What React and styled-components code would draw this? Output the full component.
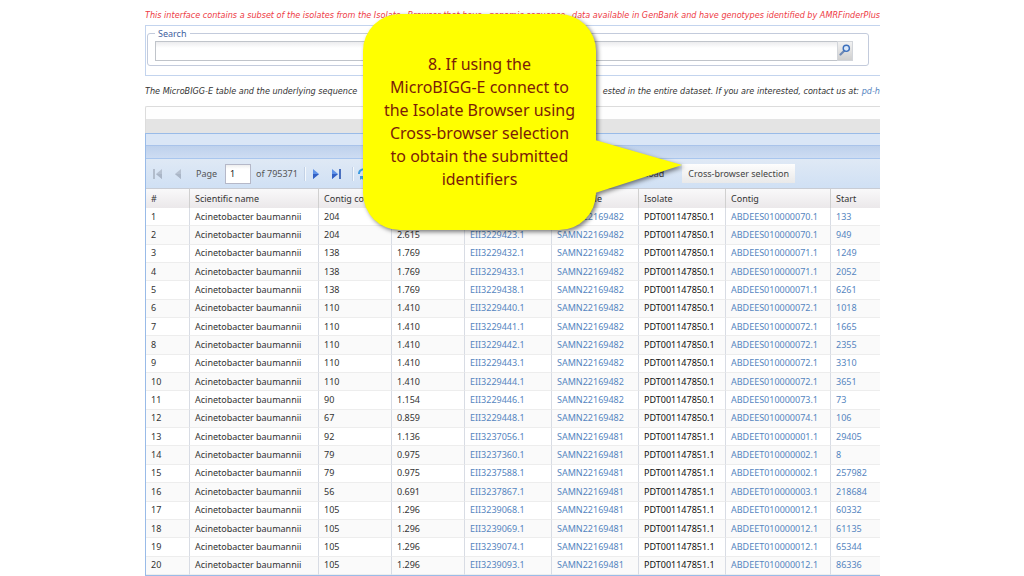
// Libs
import React from 'react';
import styled, { createGlobalStyle } from 'styled-components';

// Data
const columns = [
	{ title: '#', width: 43 },
	{ title: 'Scientific name', width: 129 },
	{ title: 'Contig cov', width: 73 },
	{ title: 'Ratio', width: 73 },
	{ title: 'Protein', width: 87, link: true },
	{ title: 'BioSample', width: 87, link: true },
	{ title: 'Isolate', width: 87, dark: true },
	{ title: 'Contig', width: 105, link: true },
	{ title: 'Start', link: true },
];

const rows = [
	['204', '2.615', 'EII3229422.1', 'SAMN22169482', 'PDT001147850.1', 'ABDEES010000070.1', '133'],
	['204', '2.615', 'EII3229423.1', 'SAMN22169482', 'PDT001147850.1', 'ABDEES010000070.1', '949'],
	['138', '1.769', 'EII3229432.1', 'SAMN22169482', 'PDT001147850.1', 'ABDEES010000071.1', '1249'],
	['138', '1.769', 'EII3229433.1', 'SAMN22169482', 'PDT001147850.1', 'ABDEES010000071.1', '2052'],
	['138', '1.769', 'EII3229438.1', 'SAMN22169482', 'PDT001147850.1', 'ABDEES010000071.1', '6261'],
	['110', '1.410', 'EII3229440.1', 'SAMN22169482', 'PDT001147850.1', 'ABDEES010000072.1', '1018'],
	['110', '1.410', 'EII3229441.1', 'SAMN22169482', 'PDT001147850.1', 'ABDEES010000072.1', '1665'],
	['110', '1.410', 'EII3229442.1', 'SAMN22169482', 'PDT001147850.1', 'ABDEES010000072.1', '2355'],
	['110', '1.410', 'EII3229443.1', 'SAMN22169482', 'PDT001147850.1', 'ABDEES010000072.1', '3310'],
	['110', '1.410', 'EII3229444.1', 'SAMN22169482', 'PDT001147850.1', 'ABDEES010000072.1', '3651'],
	['90', '1.154', 'EII3229446.1', 'SAMN22169482', 'PDT001147850.1', 'ABDEES010000073.1', '73'],
	['67', '0.859', 'EII3229448.1', 'SAMN22169482', 'PDT001147850.1', 'ABDEES010000074.1', '106'],
	['92', '1.136', 'EII3237056.1', 'SAMN22169481', 'PDT001147851.1', 'ABDEET010000001.1', '29405'],
	['79', '0.975', 'EII3237360.1', 'SAMN22169481', 'PDT001147851.1', 'ABDEET010000002.1', '8'],
	['79', '0.975', 'EII3237588.1', 'SAMN22169481', 'PDT001147851.1', 'ABDEET010000002.1', '257982'],
	['56', '0.691', 'EII3237867.1', 'SAMN22169481', 'PDT001147851.1', 'ABDEET010000003.1', '218684'],
	['105', '1.296', 'EII3239068.1', 'SAMN22169481', 'PDT001147851.1', 'ABDEET010000012.1', '60332'],
	['105', '1.296', 'EII3239069.1', 'SAMN22169481', 'PDT001147851.1', 'ABDEET010000012.1', '61135'],
	['105', '1.296', 'EII3239074.1', 'SAMN22169481', 'PDT001147851.1', 'ABDEET010000012.1', '65344'],
	['105', '1.296', 'EII3239093.1', 'SAMN22169481', 'PDT001147851.1', 'ABDEET010000012.1', '86336'],
];

// Styles
const GlobalStyle = createGlobalStyle`
	* {
		box-sizing: border-box;
	}

	body {
		margin: 0;
		background: #fff;
		font-family: 'Noto Sans', sans-serif;
		font-size: 9px;
		color: #333;
	}

	a {
		color: #5585c0;
		text-decoration: none;
	}
`;

const Page = styled.main`
	position: relative;
	display: flex;
	flex-direction: column;
	min-height: 100vh;
	margin: 0 144px 0 145px;
	padding-top: 7px;
	overflow: hidden;
`;

const Notice = styled.p`
	display: flex;
	justify-content: space-between;
	margin: 0;
	line-height: 16px;
	font-family: 'DejaVu Sans Condensed', 'Noto Sans', sans-serif;
	font-style: italic;
	white-space: nowrap;
	overflow: hidden;
	color: ${(props) => (props.$warning ? '#ee3a44' : '#333')};
`;

const SearchPanel = styled.form`
	height: 51px;
	margin: 2px 0 7px;
	padding: 1px 11px 0 1px;
	border: 1px solid #c3d4ee;
	border-right: none;
`;

const SearchBox = styled.fieldset`
	display: flex;
	margin: 0;
	padding: 1px 15px 4px 7px;
	border: 1px solid #c3cbdc;
	border-radius: 3px;

	legend {
		padding: 0 3px;
		line-height: 13px;
		color: #3f62a0;
	}
`;

const SearchInput = styled.input`
	flex: 1;
	height: 20px;
	border: 1px solid #c0c4ca;
	border-right: none;
	background: linear-gradient(#ececee, #fff 6px);
	font: inherit;
	outline: none;
`;

const SearchButton = styled.button`
	display: flex;
	align-items: center;
	justify-content: center;
	width: 16px;
	height: 20px;
	padding: 0 0 3px;
	border: 1px solid #d2d5da;
	background: linear-gradient(#f2f2f2, #cfcfcf);
`;

const FilterBar = styled.div`
	height: 27px;
	margin-top: 7px;
	border: 1px solid #dcdcdc;
	border-width: 1px 0 0 1px;
	border-radius: 2px 0 0 0;
	background: linear-gradient(#fefefe 12px, #e4e4e4 12px);
`;

const GridPanel = styled.section`
	flex: 1;
	display: flex;
	flex-direction: column;
	border: 1px solid #99bbe8;
	border-right: none;
`;

const TitleBar = styled.div`
	height: 11px;
	background: #dae6f6;
`;

const SubBar = styled.div`
	height: 14px;
	border-top: 1px solid #a9c3ea;
	border-bottom: 1px solid #a9c6ee;
	background: linear-gradient(#bed1ec, #cddcf2);
`;

const Toolbar = styled.div`
	display: flex;
	align-items: center;
	height: 29px;
	padding: 0 85px 0 5px;
	background: linear-gradient(#dfe9f5, #d0e0f4);
	color: #555;
`;

const IconButton = styled.button`
	display: flex;
	align-items: center;
	justify-content: center;
	width: 21px;
	height: 20px;
	padding: 0 9px 0 0;
	border: none;
	background: transparent;
	opacity: ${(props) => (props.disabled ? 0.7 : 1)};
`;

const Separator = styled.span`
	width: 2px;
	height: 14px;
	margin-right: 4px;
	background: #f4f8fc;
	border-left: 1px solid #c3d2e6;
`;

const PageLabel = styled.label`
	display: flex;
	align-items: center;
	gap: 8px;
	margin: 0 5px 0 3px;
`;

const PageInput = styled.input`
	width: 26px;
	height: 20px;
	padding: 0 4px;
	border: 1px solid #b5b8c8;
	background: linear-gradient(#eee, #fff 4px);
	font: inherit;
	color: #222;
	outline: none;
`;

const Total = styled.span`
	width: 48px;
	white-space: nowrap;
`;

const ToolButton = styled.button`
	height: 19px;
	padding: 0 6px;
	border: none;
	background: ${(props) => (props.$raised ? 'linear-gradient(#fdfdfd, #e9e9e9)' : 'transparent')};
	margin-left: ${(props) => (props.$raised ? '12px' : 'auto')};
	font: inherit;
	white-space: nowrap;
	color: #444;
`;

const TableWrapper = styled.div`
	flex: 1;
	display: flex;
`;

const Table = styled.table`
	width: 100%;
	table-layout: fixed;
	border-collapse: separate;
	border-spacing: 0;

	tbody tr:nth-child(even) {
		background: #fafafa;
	}
`;

const HeaderCell = styled.th`
	height: 20px;
	padding: 0 0 0 5px;
	border-left: ${(props) => (props.$first ? 'none' : '1px solid #d0d0d0')};
	border-top: 1px solid #c8ccd4;
	background: linear-gradient(#f9f9fa, #ebe8ea);
	font-weight: 400;
	text-align: left;
	white-space: nowrap;
	overflow: hidden;
`;

const Cell = styled.td`
	height: 18px;
	padding: 0 0 0 5px;
	border-left: ${(props) => (props.$first ? 'none' : '1px solid #d8dce4')};
	border-bottom: 1px solid #ededed;
	line-height: 12px;
	white-space: nowrap;
	overflow: hidden;
	color: ${(props) => (props.$dark ? '#111' : '#333')};
`;

const Callout = styled.aside`
	position: absolute;
	top: 14px;
	left: 218px;
	width: 233px;
	height: 216px;
	display: flex;
	align-items: center;
	justify-content: center;
	border-radius: 37px;
	background: #ff0;
	filter: drop-shadow(2px 2px 2px rgba(0, 0, 0, 0.5));
	color: #7b1c08;
	font-size: 16px;
	line-height: 23px;
	text-align: center;

	p {
		margin: 0;
		white-space: nowrap;
	}

	svg {
		position: absolute;
		top: 126px;
		left: 232px;
	}
`;

const Arrow = ({ back, bar, off }) => (
	<svg width="10" height="10" viewBox="0 0 10 10">
		<g transform={back ? 'translate(10 0) scale(-1 1)' : undefined}>
			<path d={bar ? 'M0 0 L6 5 L0 10 Z' : 'M2 0 L8 5 L2 10 Z'} fill={off ? '#a9b3c2' : '#5f92e8'} />
			<path d={bar ? 'M0 5 H6 L0 10 Z' : 'M2 5 H8 L2 10 Z'} fill={off ? '#98a3b4' : '#3360c4'} />
			{bar && <path d="M7 0 H9 V10 H7 Z" fill={off ? '#a3adbc' : '#4a70bf'} />}
		</g>
	</svg>
);

const Refresh = () => (
	<svg width="12" height="12" viewBox="0 0 12 12" fill="none" stroke="#3d9be0" strokeWidth="2">
		<path d="M1 6 A4.5 4.5 0 0 1 9 3" />
		<path d="M11 6 A4.5 4.5 0 0 1 3 9" />
		<path d="M10 0 V4 H6 Z M2 12 V8 H6 Z" fill="#3d9be0" stroke="none" />
	</svg>
);

const Magnifier = () => (
	<svg width="12" height="12" viewBox="0 0 12 12" fill="none">
		<path d="M5 7 L1.5 10.5" stroke="#6d88b4" strokeWidth="2.2" strokeLinecap="round" />
		<circle cx="7.3" cy="4.3" r="3.1" fill="#d9e8fa" stroke="#3c6fbc" strokeWidth="1.4" />
	</svg>
);

const App = () => (
	<>
		<GlobalStyle />
		<Page>
			<Notice $warning>
				<span>This interface contains a subset of the isolates from the Isolate</span>
				<span>Browser that have</span>
				<span>genomic sequence</span>
				<span>data available in GenBank and have genotypes identified by AMRFinderPlus</span>
			</Notice>

			<SearchPanel onSubmit={(e) => e.preventDefault()}>
				<SearchBox>
					<legend>Search</legend>
					<SearchInput type="text" aria-label="Search" />
					<SearchButton type="submit" aria-label="Run search">
						<Magnifier />
					</SearchButton>
				</SearchBox>
			</SearchPanel>

			<Notice>
				<span>The MicroBIGG-E table and the underlying sequence</span>
				<span>
					ested in the entire dataset. If you are interested, contact us at: <a href="#contact">pd-h</a>
				</span>
			</Notice>

			<FilterBar />

			<GridPanel>
				<TitleBar />
				<SubBar />
				<Toolbar>
					<IconButton disabled aria-label="First page"><Arrow back bar off /></IconButton>
					<IconButton disabled aria-label="Previous page"><Arrow back off /></IconButton>
					<PageLabel>
						Page
						<PageInput type="text" defaultValue="1" />
					</PageLabel>
					<Total>of 795371</Total>
					<Separator />
					<IconButton aria-label="Next page"><Arrow /></IconButton>
					<IconButton aria-label="Last page"><Arrow bar /></IconButton>
					<Separator />
					<IconButton aria-label="Refresh"><Refresh /></IconButton>
					<ToolButton>Download</ToolButton>
					<ToolButton $raised>Cross-browser selection</ToolButton>
				</Toolbar>
				<TableWrapper>
					<Table>
						<colgroup>
							{columns.map((col) => (
								<col key={col.title} width={col.width} />
							))}
						</colgroup>
						<thead>
							<tr>
								{columns.map((col, i) => (
									<HeaderCell key={col.title} $first={i === 0}>{col.title}</HeaderCell>
								))}
							</tr>
						</thead>
						<tbody>
							{rows.map((row, n) => (
								<tr key={row[2]}>
									{[n + 1, 'Acinetobacter baumannii', ...row].map((value, i) => (
										<Cell key={columns[i].title} $first={i === 0} $dark={columns[i].dark}>
											{columns[i].link ? <a href={`#${value}`}>{value}</a> : value}
										</Cell>
									))}
								</tr>
							))}
						</tbody>
					</Table>
				</TableWrapper>
			</GridPanel>

			<Callout>
				<svg width="88" height="54" viewBox="0 0 88 54">
					<path d="M0 0 L87 25 L0 53 Z" fill="#ff0" />
				</svg>
				<p>
					8. If using the<br />
					MicroBIGG-E connect to<br />
					the Isolate Browser using<br />
					Cross-browser selection<br />
					to obtain the submitted<br />
					identifiers
				</p>
			</Callout>
		</Page>
	</>
);

export default App;
